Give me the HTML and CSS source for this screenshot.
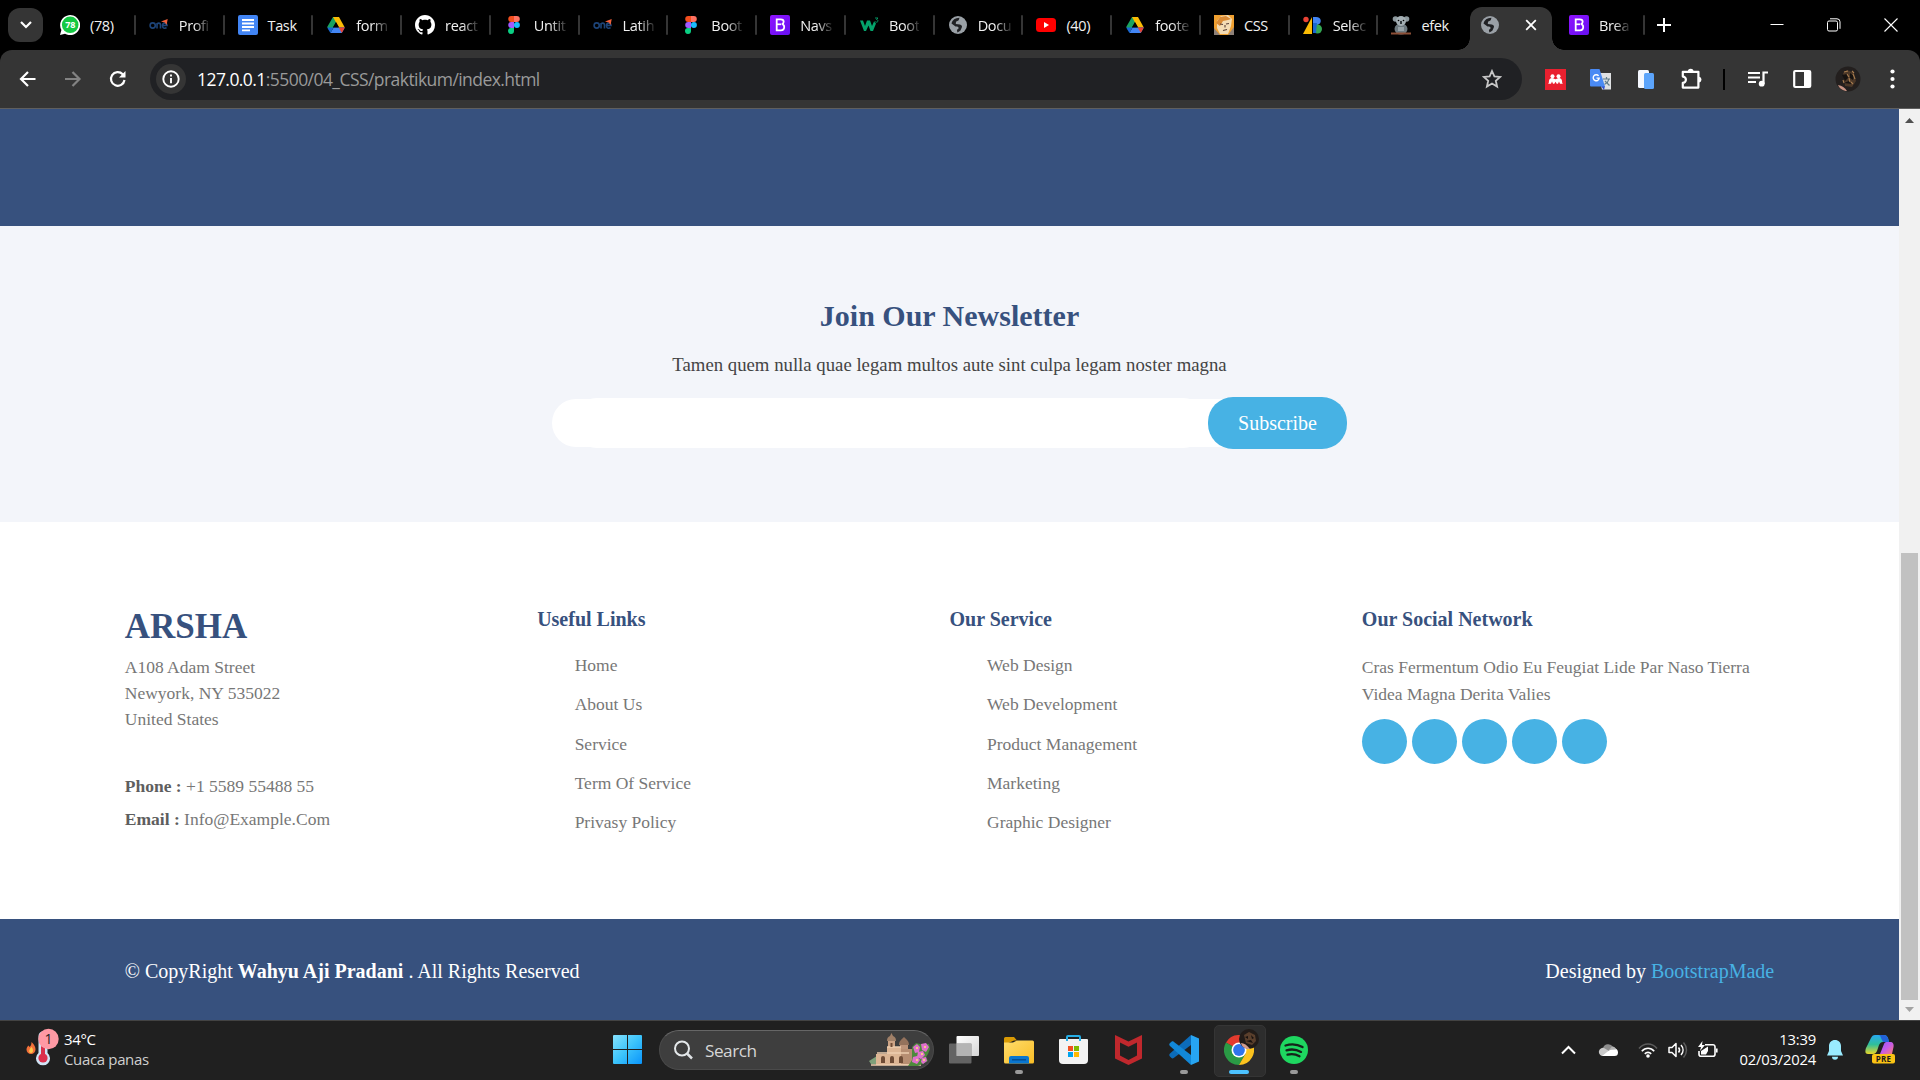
FILE: index.html
```html
<!DOCTYPE html>
<html lang="id">
<head>
<meta charset="utf-8">
<title>Arsha</title>
<link rel="stylesheet" href="styles.css">
</head>
<body>
<svg class="sprite" width="0" height="0">
  <defs>
    <linearGradient id="gWin" x1="0" y1="0" x2="1" y2="1"><stop offset="0" stop-color="#86e2fd"/><stop offset=".5" stop-color="#3cc4fb"/><stop offset="1" stop-color="#0a94fb"/></linearGradient>
    <linearGradient id="gBoot" x1="0" y1="0" x2="1" y2="1"><stop offset="0" stop-color="#9013fe"/><stop offset="1" stop-color="#6610f2"/></linearGradient>
    <linearGradient id="gFold" x1="0" y1="0" x2="1" y2="1"><stop offset="0" stop-color="#ffdc6b"/><stop offset="1" stop-color="#f9bd26"/></linearGradient>
    <linearGradient id="gTv" x1="0" y1="0" x2="1" y2="1"><stop offset="0" stop-color="#fff"/><stop offset="1" stop-color="#d6d6d6"/></linearGradient>
    <linearGradient id="gCopA" x1="0" y1="0" x2="0" y2="1"><stop offset="0" stop-color="#28a9f0"/><stop offset=".5" stop-color="#2fbf9a"/><stop offset="1" stop-color="#e9d628"/></linearGradient>
    <linearGradient id="gCopB" x1="0" y1="0" x2="1" y2="1"><stop offset="0" stop-color="#8f5cf7"/><stop offset=".5" stop-color="#c65be8"/><stop offset="1" stop-color="#ff7d6e"/></linearGradient>
    <symbol id="globe" viewBox="0 0 20 20"><circle cx="10" cy="10" r="9" fill="#9aa0a6"/><path d="M3.500 8.500C4.500 5 7 3 11.500 2.800l-.8 2.400-2.700 1.500-.2 2.300 4 .4c2 .3 2.600 1.700 2 3.100l-1.500 3.200-2.900 1.900-.5-2.700 1.800-1.700c-.3-1.600-1.200-1.700-3.200-1.800z" fill="#202124"/></symbol>
    <symbol id="drive" viewBox="0 0 20 20"><path d="M7 2h6l-3 5.200-5.400 10L1.200 12z" fill="#1aa260"/><path d="M7 2h6l5.800 10.400h-6z" fill="#fbbc04"/><path d="M7.600 12.400h11.200L15.800 18H4.400z" fill="#4285f4"/><path d="M1.200 12.400 4.400 18l3.100-5.600z" fill="#1967d2"/><path d="M12.700 12.400h6.100L15.800 18z" fill="#ea4335"/><path d="M10 7l3 5.300H7z" fill="#000"/></symbol>
    <symbol id="figma" viewBox="0 0 20 20"><path d="M10 1H7.200a3 3 0 0 0 0 6H10z" fill="#f24e1e"/><path d="M10 1h2.800a3 3 0 0 1 0 6H10z" fill="#ff7262"/><path d="M10 7H7.200a3 3 0 0 0 0 6H10z" fill="#a259ff"/><circle cx="12.900" cy="10" r="3" fill="#1abcfe"/><path d="M10 13H7.200a3 3 0 1 0 2.800 3z" fill="#0acf83"/></symbol>
    <symbol id="bootstrap" viewBox="0 0 20 20"><rect width="20" height="20" rx="2" fill="url(#gBoot)"/><path d="M6.700 4.300h4.100c1.900 0 2.900 1 2.900 2.500 0 1.300-.8 2.100-1.900 2.400 1.400.2 2.400 1.200 2.400 2.800 0 2-1.300 3.300-3.500 3.300h-4z" fill="none" stroke="#fff" stroke-width="1.800"/><path d="M6.700 9.300H11" stroke="#fff" stroke-width="1.700"/></symbol>
    <symbol id="one" viewBox="0 0 20 20"><g fill="none" stroke="#1d4478" stroke-width="1.600"><circle cx="3.700" cy="10.500" r="2.600"/><path d="M8 13.500V8M8 10c0-2.500 3.500-2.500 3.500 0v3.500M13.500 10.500H18c-.4-3.300-4.500-3.200-4.500.2 0 3 3 3 4 1.800"/></g><path d="M12 6.600 18.700 4 17.600 10l-1.700-2.500z" fill="#f0603a"/></symbol>
  </defs>
</svg>

<header class="browser">
  <div class="tabstrip">
    <button class="tab-search"><svg width="14" height="10" viewBox="0 0 14 10"><path d="M2 2l5 5 5-5" fill="none" stroke="#fff" stroke-width="2.200"/></svg></button>
    <div class="tabs">
      <div class="tab"><svg class="fav" viewBox="0 0 20 20"><path d="M0 20l1.400-5A10 10 0 1 1 5 18.700z" fill="#fff"/><circle cx="10.200" cy="9.800" r="8.300" fill="#14c943"/><text x="10.200" y="13.300" class="fav-count">78</text></svg><span class="tab-title solid">(78)</span></div>
      <div class="tab"><svg class="fav"><use href="#one"/></svg><span class="tab-title">Profi</span></div>
      <div class="tab"><svg class="fav" viewBox="0 0 20 20"><rect width="20" height="20" rx="2" fill="#4285f4"/><path d="M4 5h12M4 8.500h12M4 12h12M4 15.300h8" stroke="#fff" stroke-width="1.800"/></svg><span class="tab-title solid">Task</span></div>
      <div class="tab"><svg class="fav"><use href="#drive"/></svg><span class="tab-title">form</span></div>
      <div class="tab"><svg class="fav" viewBox="0 0 16 16"><path fill="#fff" d="M8 0C3.580 0 0 3.580 0 8c0 3.540 2.290 6.530 5.470 7.590.4.070.55-.17.55-.38 0-.19-.01-.82-.01-1.490-2.010.37-2.530-.49-2.690-.94-.09-.23-.48-.94-.82-1.130-.28-.15-.68-.52-.01-.53.63-.01 1.080.58 1.230.82.72 1.210 1.870.87 2.330.66.070-.52.28-.87.51-1.070-1.780-.2-3.640-.89-3.640-3.950 0-.87.310-1.590.82-2.150-.08-.2-.36-1.020.08-2.120 0 0 .67-.21 2.200.82.640-.18 1.320-.27 2-.27s1.360.09 2 .27c1.530-1.040 2.200-.82 2.200-.82.440 1.100.160 1.920.080 2.120.510.560.820 1.270.820 2.150 0 3.070-1.870 3.750-3.650 3.950.290.250.540.730.540 1.480 0 1.070-.01 1.930-.01 2.200 0 .210.150.460.550.380A8.010 8.010 0 0 0 16 8c0-4.420-3.580-8-8-8z"/></svg><span class="tab-title">react</span></div>
      <div class="tab"><svg class="fav"><use href="#figma"/></svg><span class="tab-title">Untit</span></div>
      <div class="tab"><svg class="fav"><use href="#one"/></svg><span class="tab-title">Latih</span></div>
      <div class="tab"><svg class="fav"><use href="#figma"/></svg><span class="tab-title">Boot</span></div>
      <div class="tab"><svg class="fav"><use href="#bootstrap"/></svg><span class="tab-title">Navs</span></div>
      <div class="tab"><svg class="fav" viewBox="0 0 20 20"><path d="M1 5.500h3L6 11l2-5.500h3l2 5.500 2-4.500 2 2L14 16h-2.500L9.500 10.500 7 16H5z" fill="#04a36b"/><path d="M16 3h3l-1.500 1.500c2 .2 1.800 3-.2 2.700-.7 0-1.200-.4-1.400-.8" fill="none" stroke="#04a36b" stroke-width=".9"/></svg><span class="tab-title">Boot</span></div>
      <div class="tab"><svg class="fav"><use href="#globe"/></svg><span class="tab-title">Docu</span></div>
      <div class="tab"><svg class="fav" viewBox="0 0 20 20"><rect y="3" width="20" height="14" rx="3.500" fill="#f00"/><path d="M8 7v6l5-3z" fill="#fff"/></svg><span class="tab-title solid">(40)</span></div>
      <div class="tab"><svg class="fav"><use href="#drive"/></svg><span class="tab-title">foote</span></div>
      <div class="tab"><svg class="fav" viewBox="0 0 20 20"><path d="M0 0h20v20H0z" fill="#f0a030"/><path d="M3 6 7 1l7-1 4 4-1 7-3 8H6L3 13z" fill="#f4dcb4"/><path d="M2 8 6 2l6-1 5 3-3 1-5 1-3 5z" fill="#d98a35"/><path d="M6 9l3 .5M12 9l3-.5M9 15.500l4-1M11 10v2.500" stroke="#5a4038" stroke-width="1.100"/><path d="M0 13l6 7H0zM20 12l-6 8h6z" fill="#8d8078"/></svg><span class="tab-title solid">CSS</span></div>
      <div class="tab"><svg class="fav" viewBox="0 0 20 20"><circle cx="3" cy="4.500" r="2.700" fill="#ea4335"/><path d="M9 2v17H0z" fill="#fbbc04"/><path d="M10 2h3c6 0 6 6.500 2 7.600L10 18z" fill="#4285f4"/><circle cx="14.500" cy="14" r="4.500" fill="#34a853"/><path d="M10 8h4l-1 10h-3z" fill="#1967d2"/></svg><span class="tab-title">Selec</span></div>
      <div class="tab tab-last"><svg class="fav" viewBox="0 0 20 20"><ellipse cx="10" cy="14" rx="6.500" ry="5.500" fill="#6e7a80"/><circle cx="4.500" cy="4" r="2.800" fill="#8e9a9f"/><circle cx="15.500" cy="4" r="2.800" fill="#8e9a9f"/><circle cx="10" cy="6" r="5" fill="#a4afb4"/><path d="M9 6h2v3H9z" fill="#30383c"/><circle cx="7.500" cy="5.500" r=".8"/><circle cx="12.500" cy="5.500" r=".8"/><path d="M0 18.500h20" stroke="#8c4f36" stroke-width="2"/><path d="M7 12h6v4H7z" fill="#97a2a7"/></svg><span class="tab-title solid">efek</span></div>
      <div class="tab tab-active"><svg class="fav"><use href="#globe"/></svg><svg class="tab-close" width="12" height="12" viewBox="0 0 12 12"><path d="M1.200 1.200l9.600 9.600M10.800 1.200l-9.600 9.600" stroke="#fff" stroke-width="1.800"/></svg></div>
      <div class="tab"><svg class="fav"><use href="#bootstrap"/></svg><span class="tab-title">Brea</span></div>
    </div>
    <svg class="new-tab" width="14" height="14" viewBox="0 0 14 14"><path d="M7 0v14M0 7h14" stroke="#fff" stroke-width="2"/></svg>
    <div class="window-buttons">
      <svg width="14" height="14" viewBox="0 0 14 14"><path d="M.5 6.500h13" stroke="#fff"/></svg>
      <svg width="14" height="14" viewBox="0 0 14 14"><rect x=".5" y="3" width="10" height="10" rx="1.500" fill="none" stroke="#fff"/><path d="M3 .8h7a3 3 0 0 1 3 3v7" fill="none" stroke="#fff"/></svg>
      <svg width="14" height="14" viewBox="0 0 14 14"><path d="M.5.500l13 13M13.500.500l-13 13" stroke="#fff" stroke-width="1.100"/></svg>
    </div>
  </div>
  <div class="toolbar">
    <div class="nav-buttons">
      <svg width="20" height="20" viewBox="0 0 20 20"><path d="M17.500 10H3.500M10 3l-7 7 7 7" fill="none" stroke="#fff" stroke-width="2.200"/></svg>
      <svg width="20" height="20" viewBox="0 0 20 20"><path d="M2 10h14M9.500 3l7 7-7 7" fill="none" stroke="#838383" stroke-width="2.200"/></svg>
      <svg width="20" height="20" viewBox="0 0 20 20"><path d="M16.500 11a6.800 6.800 0 1 1-1.800-5.700L16.500 7" fill="none" stroke="#fff" stroke-width="2.200"/><path d="M17.500 2v6.500H11z" fill="#fff"/></svg>
    </div>
    <div class="omnibox">
      <span class="site-info"><svg width="18" height="18" viewBox="0 0 18 18"><circle cx="9" cy="9" r="7.700" fill="none" stroke="#fff" stroke-width="1.900"/><path d="M9 8v5.200M9 4.600v2" stroke="#fff" stroke-width="1.900"/></svg></span>
      <span class="url"><b>127.0.0.1</b>:5500/04_CSS/praktikum/index.html</span>
      <svg class="star" width="20" height="20" viewBox="0 0 20 20"><path d="M10 2l2.400 5.400 5.700.5-4.300 3.900 1.300 5.800L10 14.500l-5.100 3.100 1.300-5.800L1.900 7.900l5.700-.5z" fill="none" stroke="#c7c7c7" stroke-width="1.800"/></svg>
    </div>
    <div class="extensions">
      <svg width="21" height="21" viewBox="0 0 21 21"><path d="M0 0h21v21H0z" fill="#e9202f"/><circle cx="7.500" cy="7.200" r="2" fill="#fff"/><circle cx="13.500" cy="7.200" r="2" fill="#fff"/><path d="M3 14.800c1-.5.800-1.500 1-3C4.300 10 5.500 9 7 9c1.600 0 2.200 1.200 3.500 1.200S12.400 9 14 9c1.500 0 2.700 1 3 2.800.2 1.500 0 2.500 1 3h-3l-1-2.300-1 2.300h-1.300l-1.200-2-1.200 2H8l-1-2.300-1 2.300z" fill="#fff"/></svg>
      <svg width="21" height="21" viewBox="0 0 21 21"><path d="M8 4h13v16.500H12z" fill="#dfe1e3"/><path d="M11 17l3 4 1-4z" fill="#2f4fd0"/><path d="M13 10h7M16.500 8v2M19 10c-.5 3-3 4.500-4.500 5.500M15 12l4.500 4.500" fill="none" stroke="#607d8b" stroke-width="1.200"/><path d="M1 0h8.500l5.500 17.500H1a1 1 0 0 1-1-1V1a1 1 0 0 1 1-1z" fill="#4a8af4"/><path d="M8.600 6.900a3 3 0 1 0 .6 2.200H6.500" fill="none" stroke="#fff" stroke-width="1.400"/></svg>
      <svg width="21" height="21" viewBox="0 0 21 21"><rect x="3" y="1" width="11" height="18" rx="1.500" fill="#f5f8ff"/><rect x="9" y="4" width="10" height="16" rx="1.500" fill="#5ca4fb"/></svg>
      <svg width="22" height="22" viewBox="0 0 22 22"><path d="M7.800 3.600a2.900 2.900 0 0 1 5.800 0z" fill="#fff"/><path d="M18.500 8.700a2.900 2.900 0 0 1 0 5.800z" fill="#fff"/><path d="M2.800 3.800h15.600v15.800H2.800v-4.800a3.100 3.100 0 0 0 0-6.200z" fill="none" stroke="#fff" stroke-width="2.200" stroke-linejoin="round"/></svg>
      <i class="divider"></i>
      <svg width="21" height="20" viewBox="0 0 21 20"><path d="M0 4h12M0 8.500h12M0 13h8" stroke="#fff" stroke-width="2"/><path d="M15.500 15V3.500H20" fill="none" stroke="#fff" stroke-width="2.200"/><circle cx="13.700" cy="14.700" r="2.900" fill="#fff"/></svg>
      <svg width="19" height="20" viewBox="0 0 19 20"><rect x="1.200" y="2" width="16" height="16" rx="1" fill="none" stroke="#fff" stroke-width="2.200"/><path d="M11 2h6v16h-6z" fill="#fff"/></svg>
      <svg class="avatar" width="26" height="26" viewBox="0 0 26 26"><circle cx="13" cy="13" r="12.500" fill="#231f1e"/><path d="M8 7l4-3 7 3 2 8-4 6-7-1z" fill="#4c3828"/><path d="M7 9l5-1 1 4-3 3zM15 7l4 3-1 4-3-2zM9 17l5-2 3 3z" fill="#161210"/><path d="M9 6l4-1M14 12l1 4M18 8l2 5M8 14l1 3M12 8l2 3M16 16l2 2M17 5l2 2" stroke="#a87d50" stroke-width="1.100"/><path d="M3 19c4 .5 7 3 9 6-4 0-7.500-2.500-9-6z" fill="#c99484"/></svg>
      <svg class="menu" width="5" height="22" viewBox="0 0 5 22" fill="#fff"><circle cx="2.500" cy="3.500" r="2.100"/><circle cx="2.500" cy="11" r="2.100"/><circle cx="2.500" cy="18.500" r="2.100"/></svg>
    </div>
  </div>
</header>

<div class="viewport">
  <main class="page">
    <section class="hero-end"></section>
    <section class="newsletter">
      <h2>Join Our Newsletter</h2>
      <p>Tamen quem nulla quae legam multos aute sint culpa legam noster magna</p>
      <form class="subscribe">
        <div class="subscribe-field"><input type="text" aria-label="Email"></div>
        <button type="button">Subscribe</button>
      </form>
    </section>
    <footer class="footer">
      <div class="footer-col">
        <h3>ARSHA</h3>
        <address>A108 Adam Street<br>Newyork, NY 535022<br>United States</address>
        <div class="contact">
          <span><b>Phone :</b> +1 5589 55488 55</span>
          <span><b>Email :</b> Info@Example.Com</span>
        </div>
      </div>
      <div class="footer-col">
        <h4>Useful Links</h4>
        <ul><li>Home</li><li>About Us</li><li>Service</li><li>Term Of Service</li><li>Privasy Policy</li></ul>
      </div>
      <div class="footer-col">
        <h4>Our Service</h4>
        <ul><li>Web Design</li><li>Web Development</li><li>Product Management</li><li>Marketing</li><li>Graphic Designer</li></ul>
      </div>
      <div class="footer-col">
        <h4>Our Social Network</h4>
        <p>Cras Fermentum Odio Eu Feugiat Lide Par Naso Tierra Videa Magna Derita Valies</p>
        <div class="social"><i></i><i></i><i></i><i></i><i></i></div>
      </div>
    </footer>
    <div class="copyright">
      <span>© CopyRight <b>Wahyu Aji Pradani</b> . All Rights Reserved</span>
      <span>Designed by <a>BootstrapMade</a></span>
    </div>
  </main>
  <div class="scrollbar">
    <svg width="9" height="5" viewBox="0 0 9 5"><path d="M0 5 4.500 0 9 5z" fill="#505050"/></svg>
    <div class="thumb"></div>
    <svg width="9" height="5" viewBox="0 0 9 5"><path d="M0 0l4.500 5L9 0z" fill="#a3a3a3"/></svg>
  </div>
</div>

<div class="taskbar">
  <div class="weather">
    <svg width="34" height="38" viewBox="0 0 34 38"><path d="M12.500 8a4.500 4.500 0 0 1 9 0v17a7 7 0 1 1-9 0z" fill="#cfe4f5"/><path d="M17 12v18" stroke="#d8304a" stroke-width="4"/><circle cx="17" cy="30" r="4.600" fill="#dc2f4c"/><path d="M5.500 14c3 3 4 5 4 7.500a4.500 4.500 0 0 1-9 0c0-2 1-3 2-4l1 1.500c1.500-1 2-3 2-5z" fill="#f2703a"/><path d="M5.500 19c2 2 2 6-.5 6s-2.500-3 .5-6z" fill="#ffc94a"/><circle cx="22.500" cy="11" r="10.200" fill="#ff99a4"/><text x="22.500" y="16" class="badge-count">1</text></svg>
    <div class="weather-text"><span>34°C</span><span class="muted">Cuaca panas</span></div>
  </div>
  <div class="pinned">
    <div class="slot"><svg width="29" height="29" viewBox="0 0 29 29"><path d="M1 0h13v14H0V1a1 1 0 0 1 1-1zM15 0h13a1 1 0 0 1 1 1v13H15zM0 15h14v14H1a1 1 0 0 1-1-1zM15 15h14v13a1 1 0 0 1-1 1H15z" fill="url(#gWin)"/></svg></div>
    <div class="search">
      <svg width="20" height="20" viewBox="0 0 20 20"><circle cx="8" cy="8.500" r="7" fill="none" stroke="#e4e8ea" stroke-width="2"/><path d="M13 13.500l5 5" stroke="#dfe3e5" stroke-width="2.500"/></svg>
      <span>Search</span>
      <svg width="61" height="33" viewBox="0 0 61 33"><path d="M0 28l8-5 4 8H2z" fill="#7fa07a"/><path d="M19 8h7v12h-7z" fill="#cda486"/><path d="M18 8c0-3 1-4 3-5L22.500 0 24 3c2 1 3 2 3 5z" fill="#a08068"/><path d="M31 12h8v12h-8z" fill="#bd947a"/><path d="M30 12c0-4 2-5 5-8 3 3 5 4 5 8z" fill="#94725c"/><path d="M18 14h14v8H18zM7 21h37v11H7z" fill="#dcb594"/><path d="M32 16h11v15H32z" fill="#b78e72"/><path d="M8 20h32M18 14h14M2 32h50" stroke="#edcdae" stroke-width="1.600"/><path d="M12 30v-5a2 2 0 0 1 4 0v5zM21 30v-5a2 2 0 0 1 4 0v5zM30 30v-5a2 2 0 0 1 4 0v5zM21.500 10h2v4h-2z" fill="#6f4c36"/><path d="M43 14l4-4 8 2 5-1 1 5-2 5-2 3 2 4-10 5H39l4-6z" fill="#4d8a3c"/><g fill="#e070cc"><path d="M44 14l4-3 3 3-1 5-4 1zM52 11l5-1 3 4-3 5-4-2zM49 19l5-1 2 4-4 4-4-2zM44 24l4-1 3 4-3 4-5-2zM53 25l4-1 1 4-4 3-2-2z"/></g><path d="M47 15h2M55 14h2M52 21h2M47 27h2M54 27h2" stroke="#ffe27a" stroke-width="1.600"/></svg>
    </div>
    <div class="slot"><svg width="30" height="28" viewBox="0 0 30 28"><rect x="7.500" width="22.500" height="20" rx="1" fill="url(#gTv)"/><rect y="7.500" width="22.500" height="20" rx="1" fill="#777" fill-opacity=".78"/><path d="M7.500 7.500h15V20h-15z" fill="#b4b4b4"/></svg></div>
    <div class="slot running"><svg width="30" height="28" viewBox="0 0 30 28"><path d="M0 2.500A1.500 1.500 0 0 1 1.500 1H10l3 3.500h-3L0 9z" fill="#d99a04"/><path d="M0 6.500h9l4-2h15.500A1.500 1.500 0 0 1 30 6v20a1.500 1.500 0 0 1-1.500 1.500h-27A1.500 1.500 0 0 1 0 26z" fill="url(#gFold)"/><path d="M5 27.500V22a2 2 0 0 1 2-2h16a2 2 0 0 1 2 2v5.500z" fill="#0a76cf"/><path d="M8 23.800h14" stroke="#04498c" stroke-width="1.300"/></svg></div>
    <div class="slot"><svg width="29" height="29" viewBox="0 0 29 29"><path d="M0 5a1 1 0 0 1 1-1h27a1 1 0 0 1 1 1v20a4 4 0 0 1-4 4H4a4 4 0 0 1-4-4z" fill="#f3f3f3"/><path d="M8 6V2a1 1 0 0 1 1-1h11a1 1 0 0 1 1 1v4" fill="none" stroke="#26aee6" stroke-width="2"/><path d="M9 11h5v5H9z" fill="#f25022"/><path d="M15 11h5v5h-5z" fill="#7fba00"/><path d="M9 17h5v5H9z" fill="#00a4ef"/><path d="M15 17h5v5h-5z" fill="#ffb900"/></svg></div>
    <div class="slot"><svg width="27" height="30" viewBox="0 0 27 30"><path d="M0 0l13.500 6.500L27 0v23.500L13.500 30 0 23.500zM5 7.500v13L13.500 25l8.500-4.500v-13l-8.500 4.300z" fill="#c0282d" fill-rule="evenodd"/></svg></div>
    <div class="slot running"><svg width="30" height="30" viewBox="0 0 30 30"><path d="M22 0 1 18.500c-1 1-1 2 0 3L2.500 23c.7.500 1.500.500 2.200 0L22 10z" fill="#0c6cba"/><path d="M22 30 1 11c-1-1-1-2 0-3l1.500-1.300c.7-.5 1.500-.5 2.200 0L22 20z" fill="#1288d8"/><path d="M22 0l8 3.500v23L22 30z" fill="#27a5f2"/></svg></div>
    <div class="slot active running"><svg width="30" height="30" viewBox="0 0 30 30"><path d="M15 15 2 7.500A15 15 0 0 1 28 7.500H15z" fill="#e33b2e"/><path d="M15 15 2 7.500A15 15 0 0 0 15 30l6.500-11.300z" fill="#2a9a45"/><path d="M15 30A15 15 0 0 0 28 7.500H15l6.500 11.200z" fill="#fcc31e"/><circle cx="15" cy="15" r="7.500" fill="#fff"/><circle cx="15" cy="15" r="5.900" fill="#2f74ec"/></svg><svg class="profile" width="20" height="20" viewBox="0 0 20 20"><circle cx="10" cy="10" r="10" fill="#211b18"/><path d="M5 6l5-3 6 3 1 6-4 4-6-2z" fill="#5a3f2c"/><path d="M6 8l3-1v3zM12 6l3 3-2 1zM7 12l5-1 2 3z" fill="#16110f"/><path d="M2 14c3 0 6 2 9 6-5 0-8-2-9-6z" fill="#d39c8c"/></svg></div>
    <div class="slot running"><svg width="28" height="28" viewBox="0 0 28 28"><circle cx="14" cy="14" r="14" fill="#1ed760"/><path d="M5.500 9.500c6-1.800 12-1.200 17 1.600M6.500 14.300c5-1.400 10-.9 14.500 1.600M7.500 18.700c4-1 8-.7 12 1.500" fill="none" stroke="#15231a" stroke-width="2.300" stroke-linecap="round"/></svg></div>
  </div>
  <div class="tray">
    <svg width="15" height="10" viewBox="0 0 15 10"><path d="M1 8.500l6.500-6.500L14 8.500" fill="none" stroke="#fff" stroke-width="2"/></svg>
    <svg width="20" height="14" viewBox="0 0 20 14"><path d="M5 5a5.500 5.500 0 0 1 10-1l-5 5z" fill="#8d8d8d"/><path d="M4 13a4 4 0 1 1 2-8l10 6z" fill="#c9c9c9"/><path d="M4 13l9-7c4-2 7 0 7 3.500a3.500 3.500 0 0 1-3.500 3.500H4z" fill="#fff"/><path d="M11 7l3-3.500a4 4 0 0 1 4 3z" fill="#b5b5b5"/></svg>
    <svg width="20" height="16" viewBox="0 0 20 16"><path d="M1 6.500c5-6 13-6 18 0" fill="none" stroke="#5c5c5c" stroke-width="1.600"/><path d="M3.800 9.300c3.500-4 9-4 12.400 0M6.800 11.900c1.800-2 4.600-2 6.400 0" fill="none" stroke="#fff" stroke-width="1.600"/><circle cx="10" cy="14" r="1.800" fill="#fff"/></svg>
    <svg width="20" height="18" viewBox="0 0 20 18"><path d="M1 6.500h3l4-4v13l-4-4H1z" fill="none" stroke="#fff" stroke-width="1.500" stroke-linejoin="round"/><path d="M10.500 6.500c1.300 1.500 1.300 3.500 0 5M13 4c2.700 3 2.700 7 0 10" fill="none" stroke="#fff" stroke-width="1.500"/><path d="M15.500 1.500c4 4.500 4 10.500 0 15" fill="none" stroke="#5c5c5c" stroke-width="1.500"/></svg>
    <svg width="20" height="17" viewBox="0 0 20 17"><path d="M7 3.700h8a2 2 0 0 1 2 2v7.600a2 2 0 0 1-2 2H3a2 2 0 0 1-2-2V10M18.800 7.500v4" fill="none" stroke="#fff" stroke-width="1.600"/><path d="M3 13.500V10l7-4.500V10l-2 3.500zM4.500 0 0 6h3L2 10l5-6H4z" fill="#fff"/></svg>
    <div class="clock"><span>13:39</span><span>02/03/2024</span></div>
    <svg width="16" height="20" viewBox="0 0 16 20"><path d="M8 0c3.500 0 6 2.600 6 6v5l2 4.500H0L2 11V6c0-3.400 2.500-6 6-6zM5 16.700h6a3 3 0 0 1-6 0z" fill="#99ebff"/></svg>
    <svg width="30" height="29" viewBox="0 0 30 29"><path d="M6 3c1-2 2-3 4-3h9c2 0 3 1 4 3l1 4h-6c-2 0-3 1-4 3l-2 6c-1 2-2 3-4 3H3c-3 0-3-3-2-6z" fill="url(#gCopA)"/><path d="M13 0h6c2 0 3 1 4 3l1 4h-6l-2-4c-.5-2-1-3-3-3z" fill="#2262d8"/><path d="M19 9c.6-1.400 1.500-2 3-2h3c3 0 4 2 3.500 5L27 19H15z" fill="url(#gCopB)"/><rect x="7" y="19" width="23" height="9.500" rx="2" fill="#fbc314"/><text x="18.500" y="27" class="pre">PRE</text></svg>
  </div>
</div>
</body>
</html>
```

FILE: styles.css
```css
* { box-sizing: border-box; }
body {
  margin: 0;
  width: 1920px;
  height: 1080px;
  overflow: hidden;
  display: flex;
  flex-direction: column;
  font-family: "Open Sans", "Noto Sans", sans-serif;
  background: #000;
}
svg { display: block; flex: none; }
.sprite { position: absolute; }
button { border: 0; padding: 0; }

/* browser chrome */
.browser { height: 109px; background: #000; border-bottom: 1px solid #5f5f5f; }
.tabstrip { height: 50px; display: flex; align-items: center; }
.tab-search {
  width: 35px; height: 34px; margin-left: 8px; border-radius: 12px;
  background: #353535; display: flex; align-items: center; justify-content: center;
}
.tabs { display: flex; margin-left: 4px; height: 50px; }
.tab {
  width: 88.77px; padding-left: 13px; display: flex; align-items: center;
  position: relative; color: #f1f1f1; font-size: 14.5px; letter-spacing: -.35px;
}
.tab::after {
  content: ""; position: absolute; right: 0; top: 15px; width: 2px; height: 20px;
  background: #353535; border-radius: 1px;
}
.tab-last::after { display: none; }
.fav { width: 20px; height: 20px; }
.fav-count { font: bold 9px "Open Sans", sans-serif; fill: #fff; text-anchor: middle; letter-spacing: -.3px; }
.tab-title {
  margin-left: 10px; white-space: nowrap;
  -webkit-mask-image: linear-gradient(90deg, #000 50%, rgba(0, 0, 0, .15));
  mask-image: linear-gradient(90deg, #000 50%, rgba(0, 0, 0, .15));
}
.tab-title.solid { -webkit-mask-image: none; mask-image: none; }
.tab-active { z-index: 1; }
.tab-active::before {
  content: ""; position: absolute; left: 3px; width: 82px; top: 7px; bottom: 0; z-index: -1;
  background: #353535; border-radius: 12px 12px 0 0;
}
.tab-active::after {
  left: -9px; right: auto; top: 38px; width: 106px; height: 12px; z-index: -1; border-radius: 0;
  background:
    radial-gradient(circle at 0 0, transparent 11.5px, #353535 12px) left / 12px 12px no-repeat,
    radial-gradient(circle at 100% 0, transparent 11.5px, #353535 12px) right / 12px 12px no-repeat;
}
.tab-close { margin-left: 25px; }
.new-tab { margin-left: 12px; }
.window-buttons { margin-left: auto; margin-right: 22px; display: flex; gap: 43px; }
.toolbar {
  height: 58px; background: #353535; border-radius: 12px 12px 0 0;
  display: flex; align-items: center;
}
.nav-buttons { display: flex; gap: 25px; margin-left: 18px; }
.omnibox {
  width: 1372px; height: 42px; margin-left: 22px; border-radius: 21px; background: #202124;
  display: flex; align-items: center; padding: 0 20px 0 6px;
}
.site-info {
  width: 30px; height: 30px; border-radius: 50%; background: #353535;
  display: flex; align-items: center; justify-content: center;
}
.url { margin-left: 11px; color: #9a9a9a; font-size: 17.5px; letter-spacing: -.56px; }
.url b { font-weight: 400; color: #fff; }
.star { margin-left: auto; }
.extensions { display: flex; align-items: center; margin-left: 23px; gap: 24px; }
.extensions .divider { width: 2px; height: 21px; background: #000; margin: 0 -1px 0 -3px; }
.extensions .avatar { margin-left: -1px; }
.extensions .menu { margin-left: 5px; }

/* page */
.viewport { height: 911px; display: flex; font-family: "Liberation Serif", "Times New Roman", serif; }
.page { width: 1899px; background: #fff; }
h2, h3, h4, p, ul { margin: 0; color: #37517e; }
.hero-end { height: 117px; background: #37517e; }
.newsletter {
  height: 296px; padding-top: 72px; background: #f3f5fa;
  display: flex; flex-direction: column; align-items: center;
}
.newsletter h2 { font-size: 30px; line-height: 36px; }
.newsletter p { margin-top: 17px; font-size: 18.75px; line-height: 28px; color: #444; }
.subscribe { display: flex; align-items: center; width: 795px; height: 52px; margin-top: 18px; }
.subscribe-field {
  width: 795px; height: 48px; margin-right: -139px; padding: 0 20px; border-radius: 25px; background: #fff;
  flex: none; display: flex; align-items: center;
}
.subscribe input { flex: none; width: 636px; height: 50px; padding: 0; border: 0; border-radius: 25px; background: #fff; }
.subscribe button {
  flex: none; width: 139px; height: 52px; border-radius: 25px; background: #47b2e4; color: #fff;
  font: 20px "Liberation Serif", serif; position: relative;
}
.footer {
  height: 397px; padding: 84px 124.8px 0; display: grid; grid-template-columns: repeat(4, 1fr);
  font-size: 17.5px; color: #777;
}
.footer h3 { font-size: 35px; line-height: 42px; }
.footer address { margin-top: 6px; line-height: 26px; font-style: normal; }
.contact { margin-top: 41px; display: flex; flex-direction: column; gap: 7px; line-height: 26px; }
.contact b { color: #5e5e5e; }
.footer h4 { margin-top: 1px; font-size: 20px; line-height: 24px; }
.footer ul {
  list-style: none; margin-top: 21.200px; padding-left: 37.5px; color: #777;
  display: flex; flex-direction: column; gap: 13.25px; line-height: 26px;
}
.footer p { margin-top: 23px; line-height: 27px; color: #777; }
.social { display: flex; gap: 5px; margin-top: 11px; }
.social i { width: 45px; height: 45px; border-radius: 50%; background: #47b2e4; }
.copyright {
  height: 101px; padding: 40px 124.8px 0; background: #37517e; color: #fff;
  display: flex; justify-content: space-between; font-size: 20px; line-height: 24px;
}
.copyright a { color: #47b2e4; }
.scrollbar {
  width: 21px; background: #f1f1f1; display: flex; flex-direction: column; align-items: center;
  padding: 9px 0 8px;
}
.thumb { width: 17px; height: 447px; margin: auto 0 7px; background: #c1c1c1; }

/* taskbar */
.taskbar {
  height: 60px; padding-bottom: 2px; background: #202020; border-top: 1px solid #434343; color: #fff;
  display: flex; align-items: center;
}
.weather { width: 600px; padding-left: 26px; display: flex; align-items: center; }
.weather svg { margin-top: -5px; }
.weather-text { margin: -2px 0 0 4px; display: flex; flex-direction: column; font-size: 15px; line-height: 20px; letter-spacing: -.35px; }
.muted { color: #cfcfcf; }
.badge-count { font: 14px "Open Sans", sans-serif; fill: #222; text-anchor: middle; }
.pinned { display: flex; align-items: center; }
.slot { width: 55px; height: 50px; position: relative; display: flex; align-items: center; justify-content: center; }
.search {
  width: 275px; height: 40px; margin: 0 2px 0 4px; border-radius: 20px; background: #3e3e3e;
  border: 1px solid #4a4a4a; border-top-color: #666; color: #d6d6d6; font-size: 17.2px; letter-spacing: -.5px;
  display: flex; align-items: center; padding: 0 3px 0 14px;
}
.search span { margin: 1px auto 0 11px; }
.running::after {
  content: ""; position: absolute; left: 50%; bottom: 1px; width: 8px; height: 4px; margin-left: -4px;
  border-radius: 2px; background: #9a9a9a;
}
.active::before {
  content: ""; position: absolute; left: 2.5px; top: 0; width: 50px; height: 50px;
  border-radius: 5px; background: #2d2d2d; border: 1px solid #353535;
}
.active svg { position: relative; }
.active .profile { position: absolute; left: 28px; top: 4px; }
.active::after { width: 20px; margin-left: -10px; background: #4cc2ff; }
.tray { margin-left: auto; margin-right: 25px; display: flex; align-items: center; }
.tray svg + svg { margin-left: 10px; }
.tray svg:nth-child(2) { margin-left: 22px; }
.tray svg:nth-child(3) { margin-left: 20px; }
.clock {
  width: 98px; margin: -2px 11px 0 0; display: flex; flex-direction: column; align-items: flex-end;
  font-size: 14.8px; line-height: 20px; letter-spacing: -.2px;
}
.tray .clock + svg + svg { margin-left: 22px; }
.pre { font: bold 8px "Open Sans", sans-serif; fill: #1b1b1b; text-anchor: middle; letter-spacing: .3px; }
```
